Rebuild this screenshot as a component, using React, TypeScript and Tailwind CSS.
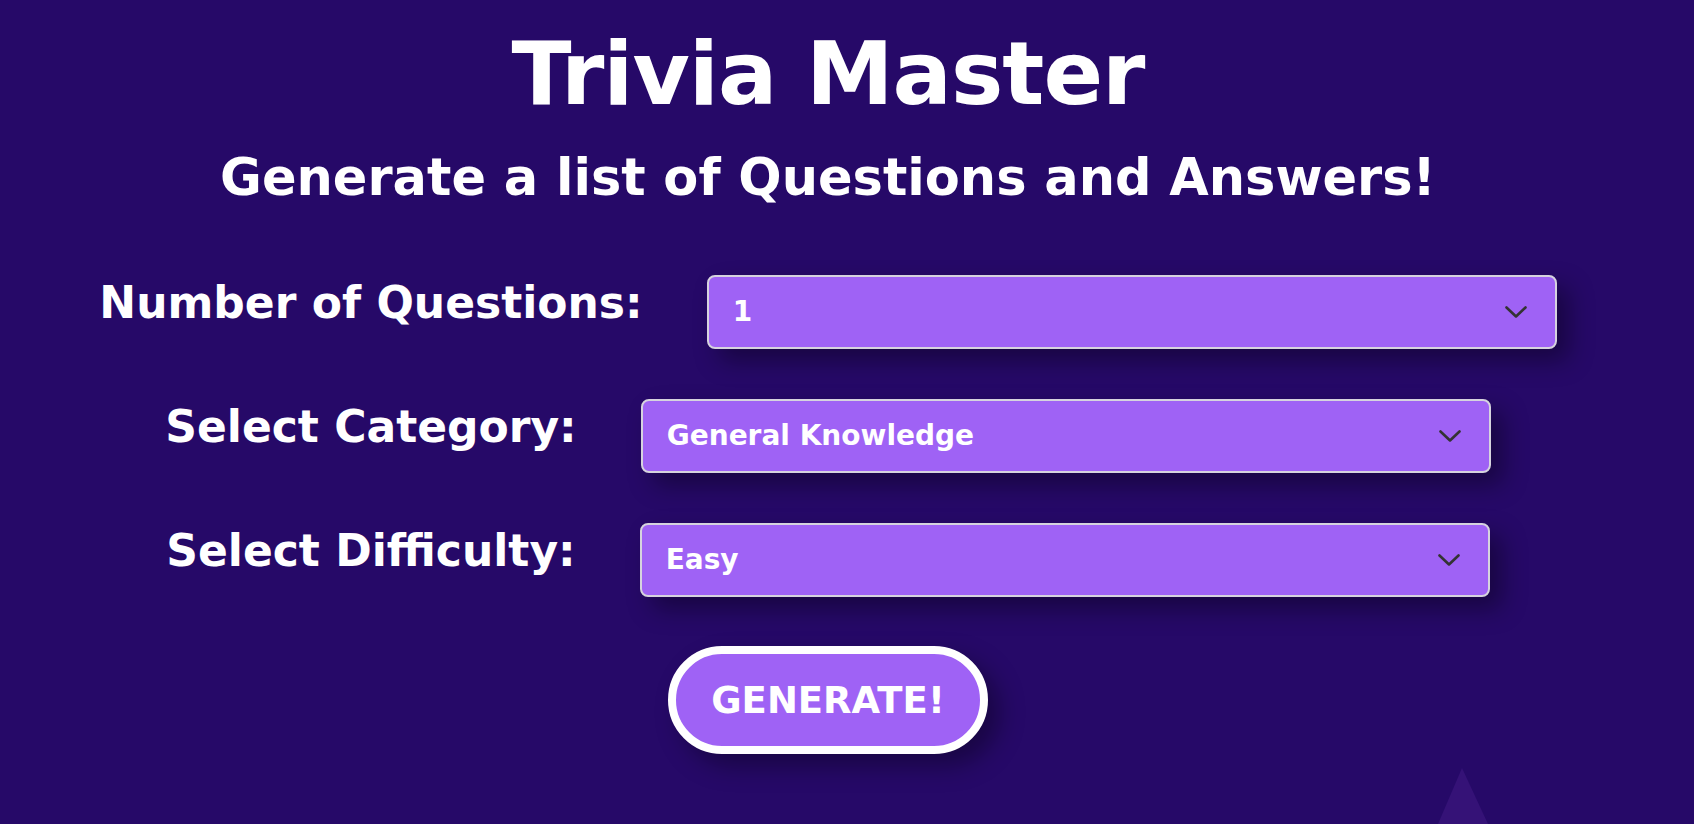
import { useState } from 'react';

const categories = ['General Knowledge', 'Science & Nature', 'History', 'Geography', 'Sports'];
const difficulties = ['Easy', 'Medium', 'Hard'];

// Chevron used inside each dropdown
function Chevron() {
  return (
    <svg width="22" height="12" viewBox="0 0 22 12" fill="none" className="shrink-0">
      <path d="M1.5 1.5 L11 10.5 L20.5 1.5" stroke="#333333" strokeWidth="2.6" strokeLinecap="round" strokeLinejoin="round" />
    </svg>
  );
}

function Dropdown({ value }: { value: string }) {
  return (
    <div className="w-[850px] h-[74px] flex items-center justify-between pl-[24px] pr-[28px] bg-[#9f62f5] border-2 border-[#d6d3de] rounded-[8px] shadow-[12px_12px_24px_rgba(0,0,0,0.36)] cursor-pointer">
      <span className="text-[28px] leading-none font-bold text-white">{value}</span>
      <Chevron />
    </div>
  );
}

function Row({ label, value }: { label: string; value: string }) {
  return (
    <div className="flex items-start gap-[64px]">
      <label className="mt-[6px] text-[44px] leading-none font-bold whitespace-nowrap">{label}</label>
      <Dropdown value={value} />
    </div>
  );
}

export default function App() {
  const [count] = useState('1');
  const [category] = useState(categories[0]);
  const [difficulty] = useState(difficulties[0]);

  return (
    <div className="relative h-[824px] overflow-hidden bg-[#260968] text-white font-['DejaVu_Sans',sans-serif]">
      {/* Background decoration */}
      <svg className="absolute left-[1438px] top-[768px]" width="50" height="56" viewBox="0 0 50 56">
        <polygon points="24,0 50,56 0,56" fill="#351277" />
      </svg>

      <div className="relative flex flex-col items-center pr-[38px]">
        <h1 className="mt-[30px] text-[88px] leading-none font-bold tracking-[-1px]">Trivia Master</h1>
        <h2 className="mt-[34px] text-[51px] leading-none font-bold">Generate a list of Questions and Answers!</h2>

        {/* Form */}
        <div className="mt-[72px] flex flex-col items-center gap-[50px]">
          <Row label="Number of Questions:" value={count} />
          <Row label="Select Category:" value={category} />
          <Row label="Select Difficulty:" value={difficulty} />
        </div>

        <button className="mt-[49px] w-[320px] h-[108px] rounded-full border-[8px] border-white bg-[#9f62f5] text-[37px] leading-none font-bold text-white shadow-[12px_12px_24px_rgba(0,0,0,0.34)]">
          GENERATE!
        </button>
      </div>
    </div>
  );
}
